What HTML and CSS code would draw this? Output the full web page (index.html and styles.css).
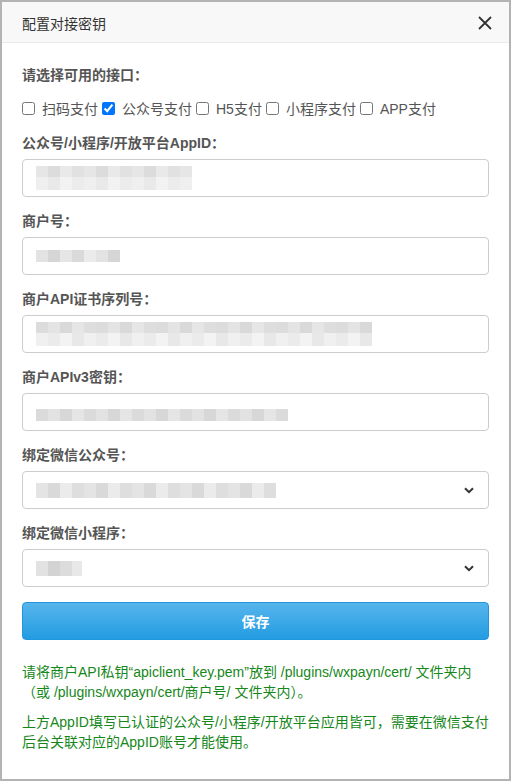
FILE: index.html
```html
<!DOCTYPE html>
<html lang="zh-CN">
<head>
    <meta charset="UTF-8">
    <meta name="viewport" content="width=device-width, initial-scale=1.0">
    <title>配置对接密钥</title>
    <link rel="stylesheet" href="styles.css">
</head>
<body>
    <div class="modal">
        <div class="modal-header">
            <span class="modal-title">配置对接密钥</span>
            <svg class="close-icon" width="14" height="14" viewBox="0 0 14 14">
                <path d="M1 1 L13 13 M13 1 L1 13" stroke="#333" stroke-width="1.8" fill="none"/>
            </svg>
        </div>
        <form class="modal-body" action="" onsubmit="event.preventDefault()">
            <p class="field-label">请选择可用的接口：</p>
            <div class="check-row">
                <label class="check-item"><input type="checkbox" class="check-box">扫码支付</label>
                <label class="check-item"><input type="checkbox" class="check-box" checked>公众号支付</label>
                <label class="check-item"><input type="checkbox" class="check-box">H5支付</label>
                <label class="check-item"><input type="checkbox" class="check-box">小程序支付</label>
                <label class="check-item"><input type="checkbox" class="check-box">APP支付</label>
            </div>

            <p class="field-label">公众号/小程序/开放平台AppID：</p>
            <div class="form-field"><span class="mosaic mosaic-appid"></span></div>

            <p class="field-label">商户号：</p>
            <div class="form-field"><span class="mosaic mosaic-mchid"></span></div>

            <p class="field-label">商户API证书序列号：</p>
            <div class="form-field"><span class="mosaic mosaic-serial"></span></div>

            <p class="field-label">商户APIv3密钥：</p>
            <div class="form-field"><span class="mosaic mosaic-v3key"></span></div>

            <p class="field-label">绑定微信公众号：</p>
            <div class="form-field select-field">
                <span class="mosaic mosaic-mp"></span>
                <svg class="select-arrow" width="10" height="7" viewBox="0 0 10 7">
                    <path d="M1 1.2 L5 5.2 L9 1.2" stroke="#333" stroke-width="2" fill="none"/>
                </svg>
            </div>

            <p class="field-label">绑定微信小程序：</p>
            <div class="form-field select-field">
                <span class="mosaic mosaic-mini"></span>
                <svg class="select-arrow" width="10" height="7" viewBox="0 0 10 7">
                    <path d="M1 1.2 L5 5.2 L9 1.2" stroke="#333" stroke-width="2" fill="none"/>
                </svg>
            </div>

            <button type="submit" class="submit-btn">保存</button>

            <p class="help-text">请将商户API私钥“apiclient_key.pem”放到 /plugins/wxpayn/cert/ 文件夹内<br>（或 /plugins/wxpayn/cert/商户号/ 文件夹内）。</p>
            <p class="help-text">上方AppID填写已认证的公众号/小程序/开放平台应用皆可，需要在微信支付后台关联对应的AppID账号才能使用。</p>
        </form>
    </div>
</body>
</html>
```

FILE: styles.css
```css
html, body {
    margin: 0;
    padding: 0;
    background-color: #fff;
}
body {
    font-family: "Liberation Sans", "Noto Sans CJK SC", sans-serif;
    font-size: 14px;
    color: #333;
}
.modal {
    width: 511px;
    height: 781px;
    box-sizing: border-box;
    border: 2px solid #b3b3b3;
    background-color: #fff;
}
.modal-header {
    height: 41px;
    box-sizing: border-box;
    padding: 2px 17px 0 20px;
    display: flex;
    align-items: center;
    justify-content: space-between;
    background-color: #f8f8f8;
    border-bottom: 1px solid #eaeaea;
}
.modal-title {
    font-size: 14px;
    color: #333;
}
.close-icon {
    display: block;
}
.modal-body {
    margin: 0;
    padding: 22px 20px 0 20px;
}
.field-label {
    margin: 0 0 6px 0;
    line-height: 20px;
    font-weight: bold;
    color: #555;
}
.check-row {
    display: flex;
    align-items: center;
    height: 20px;
    margin: 13px 0 15px 0;
    color: #555;
}
.check-item {
    display: flex;
    align-items: center;
    margin-right: 4px;
}
.check-box {
    width: 13px;
    height: 13px;
    margin: 0 7px 0 0;
}
.form-field {
    height: 38px;
    box-sizing: border-box;
    margin-bottom: 14px;
    padding: 0 13px;
    border: 1px solid #ccc;
    border-radius: 4px;
    display: flex;
    align-items: center;
    background-color: #fff;
}
.select-field {
    justify-content: space-between;
    padding-right: 14px;
}
.mosaic {
    display: block;
    height: 24px;
    background-repeat: no-repeat;
}
.mosaic-appid {
    width: 156px;
    background-image:
        repeating-linear-gradient(90deg, #e6e6e6 0 12px, #dcdcdc 12px 24px, #e9e9e9 24px 36px, #e1e1e1 36px 48px),
        repeating-linear-gradient(90deg, #efefef 0 12px, #e9e9e9 12px 24px, #f2f2f2 24px 36px, #ececec 36px 48px);
    background-size: 156px 11px, 156px 13px;
    background-position: 0 0, 0 11px;
}
.mosaic-mchid {
    width: 84px;
    height: 12px;
    background-image: repeating-linear-gradient(90deg, #e3e3e3 0 12px, #d6d6d6 12px 24px, #e6e6e6 24px 36px, #dadada 36px 48px, #ebebeb 48px 60px);
}
.mosaic-serial {
    width: 336px;
    background-image:
        repeating-linear-gradient(90deg, #dcdcdc 0 12px, #e4e4e4 12px 24px, #d9d9d9 24px 36px, #e6e6e6 36px 48px, #dedede 48px 60px),
        repeating-linear-gradient(90deg, #f0f0f0 0 12px, #ebebeb 12px 24px, #f3f3f3 24px 36px, #e8e8e8 36px 48px);
    background-size: 336px 11px, 336px 13px;
    background-position: 0 0, 0 11px;
}
.mosaic-v3key {
    width: 252px;
    height: 12px;
    margin-top: 6px;
    background-image: repeating-linear-gradient(90deg, #dbdbdb 0 12px, #e2e2e2 12px 24px, #d7d7d7 24px 36px, #e5e5e5 36px 48px);
}
.mosaic-mp {
    width: 240px;
    height: 15px;
    background-image: repeating-linear-gradient(90deg, #e4e4e4 0 12px, #d9d9d9 12px 24px, #ebebeb 24px 36px, #dedede 36px 48px);
}
.mosaic-mini {
    width: 46px;
    height: 15px;
    background-image: repeating-linear-gradient(90deg, #e2e2e2 0 12px, #d3d3d3 12px 24px, #dcdcdc 24px 36px, #e8e8e8 36px 48px);
}
.select-arrow {
    display: block;
}
.submit-btn {
    display: block;
    width: 100%;
    height: 38px;
    margin-top: 15px;
    border: 1px solid #2196da;
    border-radius: 4px;
    background: linear-gradient(#56b5ec, #239ce2);
    color: #fff;
    font-family: "Liberation Sans", "Noto Sans CJK SC", sans-serif;
    font-size: 14px;
    font-weight: bold;
    cursor: pointer;
}
.help-text {
    margin: 22px 0 0 0;
    line-height: 20px;
    color: #16871a;
}
.help-text + .help-text {
    margin-top: 10px;
}
```
